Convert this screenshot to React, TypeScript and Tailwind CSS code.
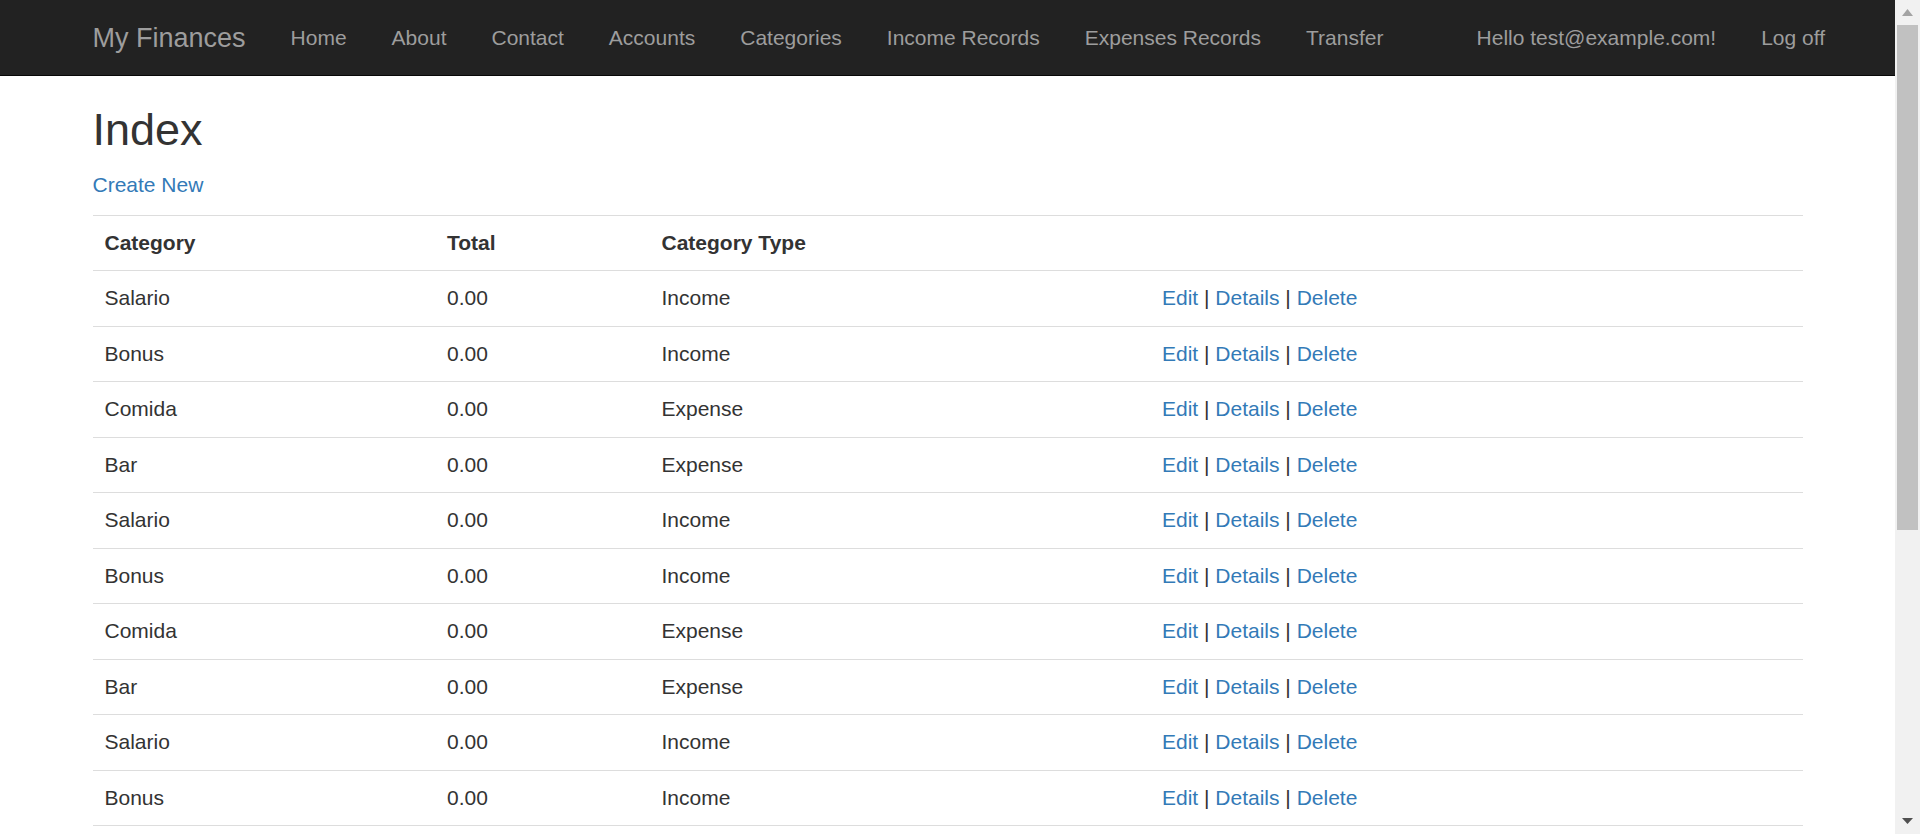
import React from "react";

const navLinks = [
  "Home",
  "About",
  "Contact",
  "Accounts",
  "Categories",
  "Income Records",
  "Expenses Records",
  "Transfer",
];

const base = [
  { name: "Salario", type: "Income" },
  { name: "Bonus", type: "Income" },
  { name: "Comida", type: "Expense" },
  { name: "Bar", type: "Expense" },
];

const rows = [...base, ...base, ...base].slice(0, 10);

function Navbar() {
  return (
    <nav className="h-[76px] bg-[#222] border-b border-[#080808]">
      <div className="mx-auto w-[1710px] flex">
        <a className="-ml-[22.5px] px-[22.5px] py-[22.5px] text-[27px] leading-[30px] text-[#9d9d9d]">
          My Finances
        </a>
        <ul className="flex">
          {navLinks.map((l) => (
            <li key={l}>
              <a className="block px-[22.5px] py-[22.5px] leading-[30px] text-[#9d9d9d]">
                {l}
              </a>
            </li>
          ))}
        </ul>
        <ul className="flex ml-auto -mr-[45px]">
          <li>
            <a className="block px-[22.5px] py-[22.5px] leading-[30px] text-[#9d9d9d]">
              Hello test@example.com!
            </a>
          </li>
          <li>
            <a className="block px-[22.5px] py-[22.5px] leading-[30px] text-[#9d9d9d]">
              Log off
            </a>
          </li>
        </ul>
      </div>
    </nav>
  );
}

function Scrollbar() {
  return (
    <div className="w-[25px] shrink-0 bg-[#f1f1f1] flex flex-col">
      <svg width="25" height="25" className="shrink-0">
        <polygon points="7,16 18,16 12.5,9" fill="#a3a3a3" />
      </svg>
      <div className="mx-[2px] h-[505px] bg-[#c1c1c1]" />
      <div className="flex-1" />
      <svg width="25" height="25" className="shrink-0">
        <polygon points="7,9 18,9 12.5,15" fill="#505050" />
      </svg>
    </div>
  );
}

function CategoryTable() {
  const cell = "px-[12px] py-[12.25px] leading-[30px] border-t border-[#ddd] text-left align-top";
  return (
    <table className="w-full table-fixed border-b border-[#ddd]">
      <colgroup>
        <col className="w-[342.5px]" />
        <col className="w-[214.5px]" />
        <col className="w-[500.5px]" />
        <col />
      </colgroup>
      <tbody>
        <tr>
          <th className={cell + " font-bold"}>Category</th>
          <th className={cell + " font-bold"}>Total</th>
          <th className={cell + " font-bold"}>Category Type</th>
          <th className={cell}></th>
        </tr>
        {rows.map((r, i) => (
          <tr key={i}>
            <td className={cell}>{r.name}</td>
            <td className={cell}>0.00</td>
            <td className={cell}>{r.type}</td>
            <td className={cell}>
              <a className="text-[#337ab7]">Edit</a> |{" "}
              <a className="text-[#337ab7]">Details</a> |{" "}
              <a className="text-[#337ab7]">Delete</a>
            </td>
          </tr>
        ))}
      </tbody>
    </table>
  );
}

export default function App() {
  return (
    <div className="flex h-[834px] overflow-hidden font-['Liberation_Sans',Arial,sans-serif] text-[21px] text-[#333]">
      <div className="flex-1 min-w-0 overflow-hidden bg-white">
        <Navbar />
        <div className="mx-auto w-[1710px]">
          <h2 className="mt-[29px] mb-[15px] text-[45px] leading-[49.5px] font-medium">
            Index
          </h2>
          <p className="mb-[15px] leading-[30px]">
            <a className="text-[#337ab7]">Create New</a>
          </p>
          <CategoryTable />
        </div>
      </div>
      <Scrollbar />
    </div>
  );
}
